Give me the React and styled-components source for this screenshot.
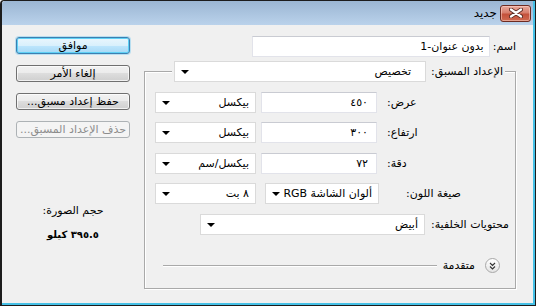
import React from 'react';
import styled, { createGlobalStyle } from 'styled-components';

const Global = createGlobalStyle`
  html, body { margin: 0; padding: 0; background: #f0f0f0; }
  body { width: 536px; height: 306px; overflow: hidden; font-family: "DejaVu Sans", sans-serif; font-size: 11px; color: #000; }
  * { box-sizing: border-box; }
`;

const Frame = styled.div`
  width: 536px;
  height: 306px;
  border: 1px solid #1c1c1c;
  border-left-width: 2px;
  border-top-left-radius: 4px;
  background: #f0f0f0;
`;

const Inner = styled.div`
  height: 100%;
  display: flex;
  flex-direction: column;
  border-right: 2px solid #45c0e6;
  border-bottom: 2px solid #45c0e6;
`;

const TitleBar = styled.div`
  height: 24px;
  flex: none;
  display: flex;
  direction: rtl;
  align-items: center;
  padding-right: 2px;
  gap: 3px;
  background: linear-gradient(#9bb6d3, #bad2eb);
  border-top-left-radius: 3px;
`;

const CloseButton = styled.div`
  width: 31px;
  height: 17px;
  border: 1px solid #6d2b22;
  border-radius: 3px;
  background: linear-gradient(#e9a99c 0%, #d77e6c 45%, #c4513b 55%, #cf6a50 100%);
  box-shadow: inset 0 0 0 1px rgba(255, 220, 210, 0.5);
  display: flex;
  align-items: center;
  justify-content: center;
`;

const Title = styled.span`
  font-size: 12px;
  line-height: 1;
  color: #000;
`;

const Body = styled.div`
  flex: 1;
  display: flex;
  background: #f0f0f0;
`;

const ButtonColumn = styled.div`
  width: 114px;
  margin-left: 14px;
  padding-top: 12px;
  display: flex;
  flex-direction: column;
  gap: 11px;
  direction: rtl;
`;

const Button = styled.div`
  height: 17px;
  border: 1px solid ${p => (p.$primary ? '#3c7fb1' : p.$disabled ? '#adb2b5' : '#707070')};
  border-radius: 3px;
  display: flex;
  align-items: center;
  justify-content: center;
  font-size: 11px;
  white-space: nowrap;
  color: ${p => (p.$disabled ? '#8d8d8d' : '#000')};
  background: ${p =>
    p.$primary
      ? 'linear-gradient(#eaf6fd 0%, #d9f0fc 50%, #bee6fd 50%, #a7d9f5 100%)'
      : p.$disabled
      ? '#f4f4f4'
      : 'linear-gradient(#f2f2f2 0%, #ebebeb 50%, #dddddd 50%, #cfcfcf 100%)'};
  box-shadow: ${p =>
    p.$primary ? 'inset 0 0 0 1px #5ed0f5, 0 0 0 1px rgba(80,190,240,0.35)' : p.$disabled ? 'none' : 'inset 0 0 0 1px rgba(255,255,255,0.7)'};
`;

const SizeInfo = styled.div`
  margin-top: 50px;
  text-align: center;
  line-height: 24px;
  font-size: 11px;
`;

const SizeValue = styled.div`
  font-weight: bold;
  font-size: 10px;
`;

const FormColumn = styled.div`
  width: 386px;
  margin-left: 3px;
  direction: rtl;
  padding-top: 11px;
  padding-right: 3px;
`;

const NameRow = styled.div`
  display: flex;
  align-items: center;
  gap: 3px;
  height: 21px;
`;

const Label = styled.span`
  white-space: nowrap;
  font-size: 11px;
  margin-left: ${p => p.$space || 0}px;
`;

const TextBox = styled.div`
  width: ${p => p.$w}px;
  height: 21px;
  background: #fff;
  border: 1px solid #e2e3ea;
  border-top-color: #c9cbd2;
  display: flex;
  align-items: center;
  padding-right: ${p => p.$pr || 5}px;
  font-size: 11px;
  white-space: nowrap;
`;

const SelectBox = styled.div`
  width: ${p => p.$w}px;
  height: 21px;
  background: #fff;
  border: 1px solid #dadada;
  display: flex;
  align-items: center;
  justify-content: space-between;
  padding: 0 ${p => p.$pr || 6}px 0 6px;
  font-size: 11px;
  white-space: nowrap;
  margin-left: ${p => p.$ml || 0}px;
`;

const Arrow = styled.span`
  width: 0;
  height: 0;
  border-left: 4px solid transparent;
  border-right: 4px solid transparent;
  border-top: 4px solid #000;
  flex: none;
`;

const Group = styled.fieldset`
  width: 372px;
  margin: 4px 0 0 11px;
  padding: 10px 0 15px 10px;
  border: 1px solid #a9a9a9;
  box-shadow: 1px 1px 0 #fff, inset 1px 1px 0 #fff;
  min-width: 0;
`;

const Legend = styled.legend`
  margin-right: 10px;
  padding: 0 2px;
  background: #f0f0f0;
  display: flex;
  align-items: center;
  gap: 5px;
  height: 21px;
`;

const FieldRow = styled.div`
  display: flex;
  align-items: center;
  justify-content: flex-end;
  height: 21px;
  gap: ${p => p.$gap || 5}px;
  margin-top: ${p => p.$mt || 0}px;
`;

const AdvancedRow = styled.div`
  display: flex;
  align-items: center;
  height: 15px;
  margin-top: 23px;
  padding-right: 15px;
  margin-left: 8px;
`;

const ExpandCircle = styled.div`
  width: 15px;
  height: 15px;
  border-radius: 50%;
  border: 1px solid #a8a8a8;
  background: linear-gradient(#ffffff, #e4e4e4);
  display: flex;
  align-items: center;
  justify-content: center;
  flex: none;
`;

const AdvancedText = styled.span`
  margin: 0 10px 0 6px;
  font-size: 11px;
  white-space: nowrap;
`;

const Rule = styled.div`
  flex: 1;
  height: 1px;
  background: #a9a9a9;
  box-shadow: 0 1px 0 #fff;
`;

function Select({ w, ml, pr, children }) {
  return (
    <SelectBox $w={w} $ml={ml} $pr={pr}>
      <span>{children}</span>
      <Arrow />
    </SelectBox>
  );
}

export default function App() {
  return (
    <>
      <Global />
      <Frame>
        <Inner>
          <TitleBar>
            <CloseButton>
              <svg width="14" height="10" viewBox="0 0 14 10">
                <path d="M2 1.5 L12 8.5 M12 1.5 L2 8.5" stroke="#5a2a22" strokeWidth="4" strokeLinecap="round" />
                <path d="M2 1.5 L12 8.5 M12 1.5 L2 8.5" stroke="#ffffff" strokeWidth="2.2" strokeLinecap="round" />
              </svg>
            </CloseButton>
            <Title>جديد</Title>
          </TitleBar>
          <Body>
            <ButtonColumn>
              <Button $primary>موافق</Button>
              <Button>إلغاء الأمر</Button>
              <Button>حفظ إعداد مسبق...</Button>
              <Button $disabled>حذف الإعداد المسبق...</Button>
              <SizeInfo>
                <div>حجم الصورة:</div>
                <SizeValue>٣٩٥.٥ كيلو</SizeValue>
              </SizeInfo>
            </ButtonColumn>
            <FormColumn>
              <NameRow>
                <Label>اسم:</Label>
                <TextBox $w={238}>بدون عنوان-1</TextBox>
              </NameRow>
              <Group>
                <Legend>
                  <Label>الإعداد المسبق:</Label>
                  <Select w={252} pr={14}>تخصيص</Select>
                </Legend>
                <FieldRow>
                  <Label $space={5}>عرض:</Label>
                  <TextBox $w={116} $pr={8}>٤٥٠</TextBox>
                  <Select w={101}>بيكسل</Select>
                </FieldRow>
                <FieldRow $mt={9}>
                  <Label $space={5}>ارتفاع:</Label>
                  <TextBox $w={116} $pr={8}>٣٠٠</TextBox>
                  <Select w={101}>بيكسل</Select>
                </FieldRow>
                <FieldRow $mt={10}>
                  <Label $space={5}>دقة:</Label>
                  <TextBox $w={116} $pr={8}>٧٢</TextBox>
                  <Select w={101}>بيكسل/سم</Select>
                </FieldRow>
                <FieldRow $mt={9} $gap={9}>
                  <Label $space={18}>صيغة اللون:</Label>
                  <Select w={114}>ألوان الشاشة RGB</Select>
                  <Select w={101}>٨ بت</Select>
                </FieldRow>
                <FieldRow $mt={10} $gap={6}>
                  <Label>محتويات الخلفية:</Label>
                  <Select w={225} ml={45}>أبيض</Select>
                </FieldRow>
                <AdvancedRow>
                  <ExpandCircle>
                    <svg width="7" height="8" viewBox="0 0 7 8">
                      <path d="M1 1 L3.5 3.5 L6 1 M1 4.5 L3.5 7 L6 4.5" stroke="#333" strokeWidth="1.1" fill="none" />
                    </svg>
                  </ExpandCircle>
                  <AdvancedText>متقدمة</AdvancedText>
                  <Rule />
                </AdvancedRow>
              </Group>
            </FormColumn>
          </Body>
        </Inner>
      </Frame>
    </>
  );
}
